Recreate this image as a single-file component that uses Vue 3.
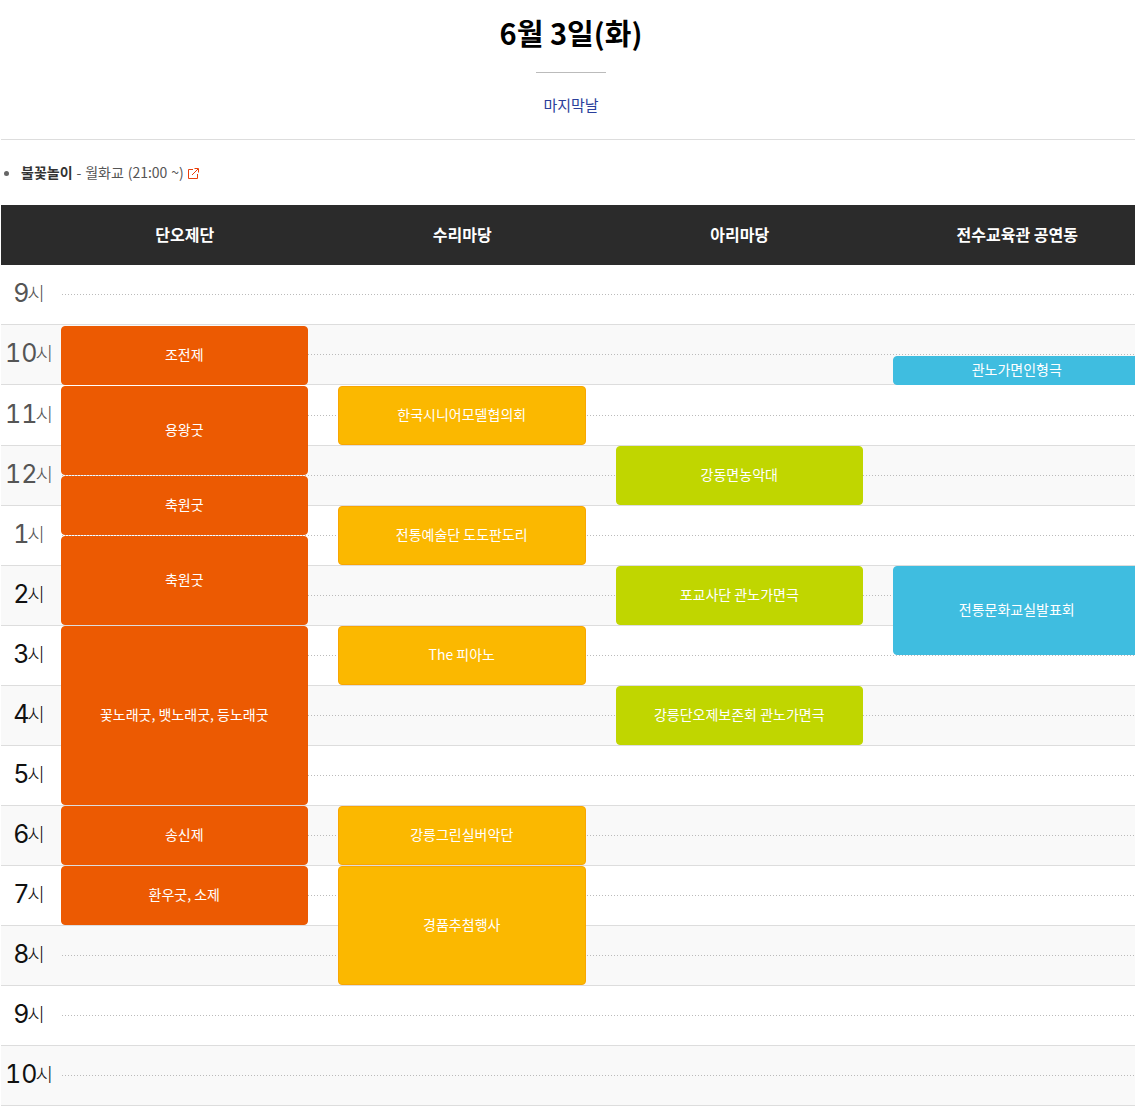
<script setup>
const hours = [
  { label: '9', dim: true, alt: false },
  { label: '10', dim: true, alt: true },
  { label: '11', dim: true, alt: false, tall: true },
  { label: '12', dim: true, alt: true },
  { label: '1', dim: true, alt: false },
  { label: '2', alt: true },
  { label: '3', alt: false },
  { label: '4', alt: true },
  { label: '5', alt: false },
  { label: '6', alt: true },
  { label: '7', alt: false },
  { label: '8', alt: true },
  { label: '9', alt: false },
  { label: '10', alt: true }
]
const venues = ['단오제단', '수리마당', '아리마당', '전수교육관 공연동']
const events = [
  { col: 0, start: 2, span: 2, name: '조전제' },
  { col: 0, start: 4, span: 3, name: '용왕굿' },
  { col: 0, start: 7, span: 2, name: '축원굿' },
  { col: 0, start: 9, span: 3, name: '축원굿' },
  { col: 0, start: 12, span: 6, name: '꽃노래굿, 뱃노래굿, 등노래굿' },
  { col: 0, start: 18, span: 2, name: '송신제' },
  { col: 0, start: 20, span: 2, name: '환우굿, 소제' },
  { col: 1, start: 4, span: 2, name: '한국시니어모델협의회' },
  { col: 1, start: 8, span: 2, name: '전통예술단 도도판도리' },
  { col: 1, start: 12, span: 2, name: 'The 피아노' },
  { col: 1, start: 18, span: 2, name: '강릉그린실버악단' },
  { col: 1, start: 20, span: 4, name: '경품추첨행사' },
  { col: 2, start: 6, span: 2, name: '강동면농악대' },
  { col: 2, start: 10, span: 2, name: '포교사단 관노가면극' },
  { col: 2, start: 14, span: 2, name: '강릉단오제보존회 관노가면극' },
  { col: 3, start: 3, span: 1, name: '관노가면인형극' },
  { col: 3, start: 10, span: 3, name: '전통문화교실발표회' }
]
const place = (e) => ({
  gridColumn: e.col + 1,
  gridRow: `${e.start + 1} / span ${e.span}`
})
</script>

<template>
  <div class="page">
    <div class="sheet">
      <header class="head">
        <h1 class="title">6월 3일(화)</h1>
        <div class="rule"></div>
        <p class="sub">마지막날</p>
      </header>

      <ul class="notes">
        <li class="note">
          <b>불꽃놀이</b><span class="detail"> - 월화교 (21:00 ~)</span>
          <svg class="ext" width="11" height="11" viewBox="0 0 11 11" fill="none" stroke="#e8400c" stroke-width="1">
            <path d="M5 1.5H.5v9h9V6" />
            <path d="M4 7 10 1M6.5.5h4v4" />
          </svg>
        </li>
      </ul>

      <div class="bar">
        <div class="bar-col" v-for="v in venues" :key="v">{{ v }}</div>
      </div>

      <div class="body">
        <div v-for="(h, i) in hours" :key="i" class="row" :class="{ alt: h.alt, tall: h.tall }">
          <div class="time" :class="{ dim: h.dim }"><span class="num">{{ h.label }}</span>시</div>
          <div class="dots"></div>
        </div>
        <div class="events">
          <div v-for="e in events" :key="e.col + '-' + e.start" class="event" :class="'c' + e.col" :style="place(e)">
            {{ e.name }}
          </div>
        </div>
      </div>
    </div>
  </div>
</template>

<style>
html, body { margin: 0; background: #fff; overflow-x: hidden; }
</style>

<style scoped>
.page {
  width: 1135px;
  overflow: hidden;
  font-family: "Noto Sans CJK KR", "Noto Sans", sans-serif;
  color: #555;
}
.sheet {
  width: 1156px;
  padding-left: 1px;
  box-sizing: border-box;
}
.head {
  width: 1140px;
  display: flex;
  flex-direction: column;
  align-items: center;
  border-bottom: 1px solid #ddd;
  height: 140px;
  box-sizing: border-box;
}
.title {
  margin: 12px 0 0;
  font-size: 29px;
  line-height: 40px;
  font-weight: 700;
  color: #000;
}
.rule {
  width: 70px;
  height: 1px;
  background: #bbb;
  margin-top: 20px;
}
.sub {
  margin: 20px 0 0;
  font-size: 15px;
  line-height: 24px;
  color: #2b3f9b;
}
.notes {
  list-style: none;
  margin: 0;
  padding: 20px 0 21px;
}
.note {
  position: relative;
  padding-left: 20px;
  font-size: 14px;
  line-height: 24px;
  color: #555;
}
.note::before {
  content: "";
  position: absolute;
  left: 3px;
  top: 11px;
  width: 5px;
  height: 5px;
  border-radius: 50%;
  background: #666;
}
.note b {
  font-weight: 700;
  color: #333;
}
.detail {
  word-spacing: 0.75px;
}
.ext {
  vertical-align: -1px;
  margin-left: 4px;
}
.bar {
  height: 60px;
  background: #2b2b2b;
  display: grid;
  grid-template-columns: repeat(4, 277.5px);
  padding-left: 45px;
}
.bar-col {
  display: flex;
  align-items: center;
  justify-content: center;
  padding-bottom: 2px;
  color: #fff;
  font-size: 16px;
  font-weight: 700;
}
.body {
  position: relative;
}
.row {
  height: 60px;
  box-sizing: border-box;
  border-bottom: 1px solid #ddd;
  display: flex;
  align-items: center;
}
.row.tall { height: 61px; }
.row.alt { background: #f9f9f9; }
.time {
  width: 56px;
  text-align: center;
  font-size: 19px;
  font-weight: 300;
  line-height: 30px;
  color: #111;
  padding-bottom: 3px;
}
.time.dim { color: #555; }
.num {
  font-family: Inter, "Noto Sans", sans-serif;
  font-size: 25px;
  font-weight: 400;
  font-variant-numeric: tabular-nums;
  margin-right: -2px;
  vertical-align: -1px;
}
.dots {
  flex: 1;
  height: 1px;
  margin-left: 5px;
  background: repeating-linear-gradient(90deg, #bbb 0 1px, transparent 1px 3px);
}
.events {
  position: absolute;
  top: 0;
  left: 44.5px;
  display: grid;
  grid-template-columns: repeat(4, 277.5px);
  grid-auto-rows: 30px;
}
.event {
  margin: 1px 15px 0;
  padding-bottom: 4px;
  border-radius: 4px;
  border: 1px solid transparent;
  box-sizing: border-box;
  display: flex;
  align-items: center;
  justify-content: center;
  color: #fff;
  font-size: 14px;
  white-space: nowrap;
}
.c0 { background: #ec5a02; border-color: #ec5a02; }
.c1 { background: #fbb800; border-color: #f9a602; }
.c2 { background: #c0d600; border-color: #c0d600; }
.c3 { background: #3fbde0; border-color: #3fbde0; }
</style>
